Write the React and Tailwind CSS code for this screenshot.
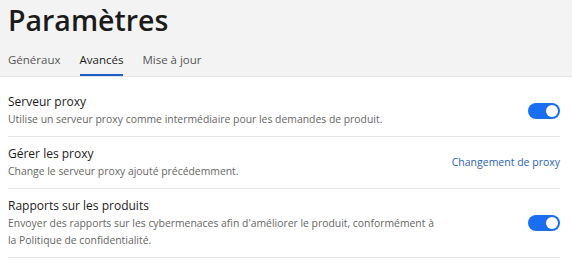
const Toggle = () => (
    <div className="w-[32px] h-[16px] rounded-full bg-[#1a6ef0] flex items-center justify-end px-[2px] shrink-0">
        <div className="w-[12px] h-[12px] rounded-full bg-white" />
    </div>
);

const SettingRow = ({ title, desc, right }) => (
    <div className="flex items-center justify-between gap-4 border-b border-[#e6e6e6] pt-[8px] pb-[8px]">
        <div className="min-w-0">
            <div className="text-[12px] leading-[17px] text-[#1b1b1b]">{title}</div>
            <div className="text-[10.4px] leading-[17px] text-[#666666] mt-[1px] max-w-[436px]">{desc}</div>
        </div>
        {right}
    </div>
);

export default function App() {
    return (
        <div className="w-[572px] h-[274px] bg-white overflow-hidden" style={{ fontFamily: "'Open Sans', 'Noto Sans', sans-serif" }}>
            <div className="bg-[#f3f3f3] border-b border-[#e3e3e3] px-[8px]">
                <h1 className="text-[28.5px] leading-[40px] font-semibold text-[#1b1b1b]">Paramètres</h1>
                <div className="flex gap-[19px] mt-[12px] text-[11.5px] leading-[16px]">
                    <div className="text-[#555555] pb-[8px]">Généraux</div>
                    <div className="text-[#1b1b1b] pb-[6px] border-b-2 border-[#1a5fc7]">Avancés</div>
                    <div className="text-[#555555] pb-[8px]">Mise à jour</div>
                </div>
            </div>
            <div className="pl-[8px] pr-[12px] pt-[8px]">
                <SettingRow
                    title="Serveur proxy"
                    desc="Utilise un serveur proxy comme intermédiaire pour les demandes de produit."
                    right={<Toggle />}
                />
                <SettingRow
                    title="Gérer les proxy"
                    desc="Change le serveur proxy ajouté précédemment."
                    right={<a className="text-[10.5px] text-[#2a62b8] shrink-0">Changement de proxy</a>}
                />
                <SettingRow
                    title="Rapports sur les produits"
                    desc="Envoyer des rapports sur les cybermenaces afin d'améliorer le produit, conformément à la Politique de confidentialité."
                    right={<Toggle />}
                />
            </div>
        </div>
    );
}
